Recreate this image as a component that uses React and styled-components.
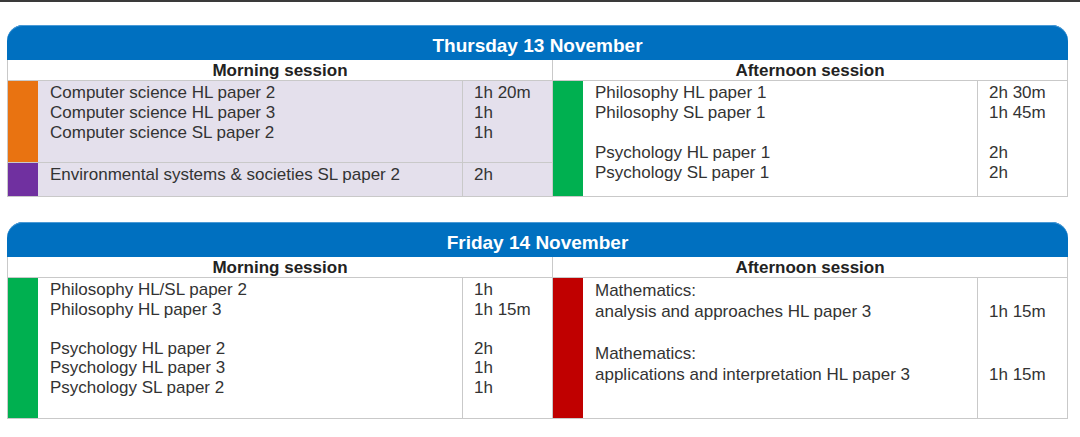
import React from "react";
import styled, { createGlobalStyle } from "styled-components";

const Global = createGlobalStyle`
  html, body { margin: 0; padding: 0; background: #ffffff; }
  body { font-family: "Liberation Sans", Arial, sans-serif; color: #333333; }
`;

const Page = styled.div`
  width: 1080px;
  height: 437px;
  background: #ffffff;
  display: flex;
  flex-direction: column;
`;

const TopRule = styled.div`
  height: 2px;
  background: #3a3a3a;
`;

const Stack = styled.div`
  display: flex;
  flex-direction: column;
  gap: 25px;
  padding: 23px 12px 0 7px;
`;

const Card = styled.section`
  width: 1061px;
  display: flex;
  flex-direction: column;
`;

const DayHeader = styled.h2`
  margin: 0;
  height: 35px;
  box-sizing: border-box;
  padding-top: 6px;
  background: #0070c0;
  border-radius: 16px 16px 0 0;
  box-shadow: inset 0 1px 0 #4a9ad6;
  color: #ffffff;
  font-size: 19px;
  font-weight: 700;
  display: flex;
  align-items: center;
  justify-content: center;
`;

const Frame = styled.div`
  border: 1px solid #c9c9c9;
  border-top: none;
  display: grid;
  grid-template-columns: 545px 1fr;
`;

const SessionTitle = styled.div`
  height: 19px;
  padding-top: 1px;
  border-bottom: 1px solid #c9c9c9;
  ${(p) => (p.$first ? "border-right: 1px solid #c9c9c9;" : "")}
  display: flex;
  align-items: center;
  justify-content: center;
  font-size: 17px;
  font-weight: 700;
  color: #222222;
  background: #ffffff;
`;

const SessionBody = styled.div`
  display: flex;
  flex-direction: column;
  height: ${(p) => p.$h}px;
  background: ${(p) => p.$bg};
  ${(p) => (p.$first ? "border-right: 1px solid #c9c9c9;" : "")}
`;

const Group = styled.div`
  display: grid;
  grid-template-columns: 30px 1fr 90px;
  ${(p) => (p.$h ? `height: ${p.$h}px;` : "")}
  flex: ${(p) => (p.$grow ? "1" : "none")};
  ${(p) => (p.$divider ? "border-top: 1px solid #c9c9c9;" : "")}
`;

const Bar = styled.div`
  background: ${(p) => p.$color};
`;

const Lines = styled.div`
  display: flex;
  flex-direction: column;
  padding-top: 2px;
  padding-left: ${(p) => (p.$dur ? 11 : 12)}px;
  ${(p) => (p.$dur ? "border-left: 1px solid #c9c9c9;" : "")}
  font-size: 17px;
  line-height: ${(p) => p.$lh}px;
  color: #333333;
`;

const Line = styled.div`
  white-space: nowrap;
  height: ${(p) => p.$lh}px;
`;

const days = [
  {
    title: "Thursday 13 November",
    height: 115,
    morningBg: "#e4e0ec",
    morning: [
      {
        color: "#e97311",
        lh: 20,
        h: 81,
        subjects: [
          "Computer science HL paper 2",
          "Computer science HL paper 3",
          "Computer science SL paper 2",
        ],
        durations: ["1h 20m", "1h", "1h"],
      },
      {
        color: "#7030a0",
        lh: 20,
        subjects: ["Environmental systems & societies SL paper 2"],
        durations: ["2h"],
      },
    ],
    afternoon: [
      {
        color: "#00b050",
        lh: 20,
        subjects: [
          "Philosophy HL paper 1",
          "Philosophy SL paper 1",
          "",
          "Psychology HL paper 1",
          "Psychology SL paper 1",
        ],
        durations: ["2h 30m", "1h 45m", "", "2h", "2h"],
      },
    ],
  },
  {
    title: "Friday 14 November",
    height: 140,
    morningBg: "#ffffff",
    morning: [
      {
        color: "#00b050",
        lh: 19.5,
        subjects: [
          "Philosophy HL/SL paper 2",
          "Philosophy HL paper 3",
          "",
          "Psychology HL paper 2",
          "Psychology HL paper 3",
          "Psychology SL paper 2",
        ],
        durations: ["1h", "1h 15m", "", "2h", "1h", "1h"],
      },
    ],
    afternoon: [
      {
        color: "#c00000",
        lh: 21,
        subjects: [
          "Mathematics:",
          "analysis and approaches HL paper 3",
          "",
          "Mathematics:",
          "applications and interpretation HL paper 3",
        ],
        durations: ["", "1h 15m", "", "", "1h 15m"],
      },
    ],
  },
];

function SessionGroups({ groups }) {
  return groups.map((g, i) => (
    <Group key={i} $grow={i === groups.length - 1} $divider={i > 0} $h={g.h}>
      <Bar $color={g.color} />
      <Lines $lh={g.lh}>
        {g.subjects.map((s, j) => (
          <Line key={j} $lh={g.lh}>{s || "\u00a0"}</Line>
        ))}
      </Lines>
      <Lines $dur $lh={g.lh}>
        {g.durations.map((d, j) => (
          <Line key={j} $lh={g.lh}>{d || "\u00a0"}</Line>
        ))}
      </Lines>
    </Group>
  ));
}

function DayTable({ day }) {
  return (
    <Card>
      <DayHeader>{day.title}</DayHeader>
      <Frame>
        <SessionTitle $first>Morning session</SessionTitle>
        <SessionTitle>Afternoon session</SessionTitle>
        <SessionBody $first $h={day.height} $bg={day.morningBg}>
          <SessionGroups groups={day.morning} />
        </SessionBody>
        <SessionBody $h={day.height} $bg="#ffffff">
          <SessionGroups groups={day.afternoon} />
        </SessionBody>
      </Frame>
    </Card>
  );
}

export default function App() {
  return (
    <>
      <Global />
      <Page>
        <TopRule />
        <Stack>
          {days.map((d) => (
            <DayTable key={d.title} day={d} />
          ))}
        </Stack>
      </Page>
    </>
  );
}
